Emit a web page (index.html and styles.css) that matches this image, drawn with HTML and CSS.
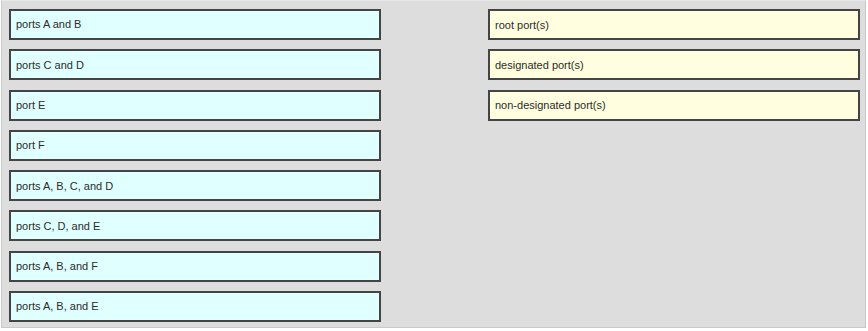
FILE: index.html
```html
<!DOCTYPE html>
<html lang="en">
<head>
    <meta charset="UTF-8">
    <title>Drag and drop - port roles</title>
    <link rel="stylesheet" href="styles.css">
</head>
<body>
    <div class="panel">
        <!-- answer choices -->
        <div class="column">
            <div class="item item-choice">ports A and B</div>
            <div class="item item-choice">ports C and D</div>
            <div class="item item-choice">port E</div>
            <div class="item item-choice">port F</div>
            <div class="item item-choice">ports A, B, C, and D</div>
            <div class="item item-choice">ports C, D, and E</div>
            <div class="item item-choice">ports A, B, and F</div>
            <div class="item item-choice">ports A, B, and E</div>
        </div>

        <!-- targets -->
        <div class="column">
            <div class="item item-target">root port(s)</div>
            <div class="item item-target">designated port(s)</div>
            <div class="item item-target">non-designated port(s)</div>
        </div>
    </div>
</body>
</html>
```

FILE: styles.css
```css
body {
    margin: 0;
    background: #ffffff;
    font-family: "Liberation Sans", Arial, sans-serif;
}

/* outer gray panel */
.panel {
    box-sizing: border-box;
    width: 865px;
    height: 328px;
    margin-left: 1px;
    padding: 8px 4px 5px 7px;
    background: #dddddd;
    border: 1px solid #c9c9c9;
    border-top-color: #e8e8e8;
    display: flex;
    gap: 107px;
}

.column {
    width: 372px;
    display: flex;
    flex-direction: column;
    gap: 9.3px;
}

/* draggable boxes */
.item {
    box-sizing: border-box;
    height: 31px;
    padding-left: 5px;
    display: flex;
    align-items: center;
    border: 2px solid #444444;
    font-size: 11px;
    color: #2b2b2b;
}

.item-choice {
    background: #e0ffff;
}

.item-target {
    background: #ffffe0;
}
```
